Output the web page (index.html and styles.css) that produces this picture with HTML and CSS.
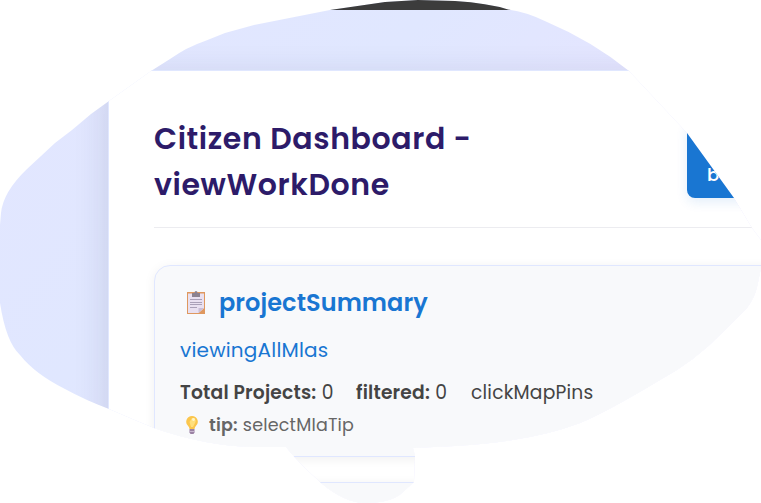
FILE: index.html
```html
<!DOCTYPE html>
<html lang="en">
<head>
<meta charset="utf-8">
<title>Citizen Dashboard</title>
<link rel="stylesheet" href="styles.css">
</head>
<body>
<div class="page">
  <div class="topbar"></div>
  <main class="dashboard">
    <header class="heading">
      <h1>Citizen Dashboard -<br>viewWorkDone</h1>
      <button class="back">b</button>
    </header>
    <section class="panel summary">
      <h2>
        <svg class="clipboard" viewBox="0 0 18 24">
          <path fill="#df985f" d="M0 1h18v22H0z"/>
          <path fill="#e9e0f0" d="M1 2.500h16v15l-5 4.500H1z"/>
          <path fill="#c9bdd7" d="M11.500 22v-5H17z"/>
          <path fill="#df985f" d="M12 22l5-4.500V22z"/>
          <path fill="#8c8290" d="M5 2h2.500Q7.500 0 9 0t1.500 2H13v4H5z"/>
          <path stroke="#aaa0b7" d="M3 8.500h12M3 11.500h12M3 13.500h12M3 16.500h7"/>
        </svg>
        <span>projectSummary</span>
      </h2>
      <p class="viewing">viewingAllMlas</p>
      <div class="stats">
        <span class="total"><b>Total Projects:</b> 0</span>
        <span class="filtered"><b>filtered:</b> 0</span>
        <span class="pins">clickMapPins</span>
      </div>
      <div class="tip">
        <svg class="bulb" viewBox="0 0 12 18">
          <path fill="#fbc64d" d="M6 0a5.700 5.700 0 0 0-4 9.800Q3.200 11 3.500 13h5q.3-2 1.500-3.200A5.700 5.700 0 0 0 6 0z"/>
          <path fill="#ffdf7c" d="M6 2a3 3 0 0 1 3.500 4L7 11H5L3.500 6z"/>
          <circle cx="7.500" cy="3.500" r="1.400" fill="#fff5c9"/>
          <path fill="#9a82a3" d="M3.500 13h5v3.500L7.500 18h-3l-1-1.500z"/>
          <path stroke="#c8b6cf" d="M3.500 15.500h5"/>
        </svg>
        <span><b>tip:</b> selectMlaTip</span>
      </div>
    </section>
    <section class="panel next"></section>
  </main>
</div>
</body>
</html>
```
FILE: styles.css
```css
* { box-sizing: border-box; }
html, body { margin: 0; width: 761px; height: 503px; overflow: hidden; background: #fff; }
body { font-family: Poppins, Inter, sans-serif; color: #444; letter-spacing: .2px; }
.page {
  width: 761px; height: 503px; overflow: hidden;
  background: linear-gradient(135deg, #e3e6ff, #e0e7ff 35%, #e6e4ff 65%);
  clip-path: path("M109 101L91 114L72 130L55 143L27 169Q3 192 1 213L0 225V303Q6 342 20 355Q35 374 65 389Q85 400 109 409Q132 419 154 428Q205 446 254 447H286Q293 456 305 468L321 483Q345 503 365 503Q392 503 403 492L414 482L415 456L413 448L455 446Q530 442 580 423Q605 413 660 380Q695 361 722 333L747 308Q755 297 757 287L761 268V240L752 228L734 198L687 133L629 71Q592 41 547 22Q527 12 508 9.500Q488 3 455 1L418 0L385 2L330 10L254 25L225 33L205 41Q187 47 170 59L151 71Z");
}
.topbar { height: 10px; background: #3c3c3c; }
.dashboard {
  margin: 60px 0 0 108px; width: 700px; height: 600px; padding: 45px 0 0 45px;
  background: #fff; border: 1px solid #e0e7ff; box-shadow: 0 8px 32px rgba(40, 50, 80, .15);
}
.heading { display: flex; justify-content: space-between; width: 620px; height: 112px; border-bottom: 1px solid #ececf0; }
h1 { margin: 0; font-size: 30px; line-height: 46px; font-weight: 600; letter-spacing: .6px; color: #2d1b69; white-space: nowrap; }
.back {
  width: 87px; height: 77px; margin-top: 5px; padding: 30px 0 0 20px; border: 0; border-radius: 8px;
  background: #1976d2; color: #fff; font: 500 18px/24px Poppins, Inter, sans-serif; text-align: left;
  box-shadow: 0 4px 12px rgba(25, 118, 210, .12);
}
.panel { width: 650px; background: #f8f9fb; border: 1px solid #e0e7ff; border-radius: 16px; box-shadow: 0 2px 12px rgba(0, 0, 0, .06); }
.summary { height: 192px; margin-top: 37px; padding: 19px 25px; }
h2 { display: flex; align-items: center; gap: 14px; height: 36px; margin: 0; padding-left: 7px; font-size: 24px; line-height: 36px; letter-spacing: .07px; font-weight: 600; color: #1976d2; }
.clipboard { width: 18px; height: 24px; fill: none; }
.viewing { margin: 14px 0 0; font-size: 20px; line-height: 30px; color: #1976d2; }
.stats { display: flex; margin-top: 13px; font-size: 18.7px; line-height: 30px; white-space: nowrap; }
.total { width: 176px; }
.filtered { width: 115px; }
b { font-weight: 600; }
.tip { display: flex; align-items: center; gap: 11px; margin-top: 3px; padding-left: 6px; font-size: 17.5px; line-height: 28px; color: #666; }
.bulb { width: 12px; height: 18px; }
.next { height: 200px; margin-top: 25px; }
```
